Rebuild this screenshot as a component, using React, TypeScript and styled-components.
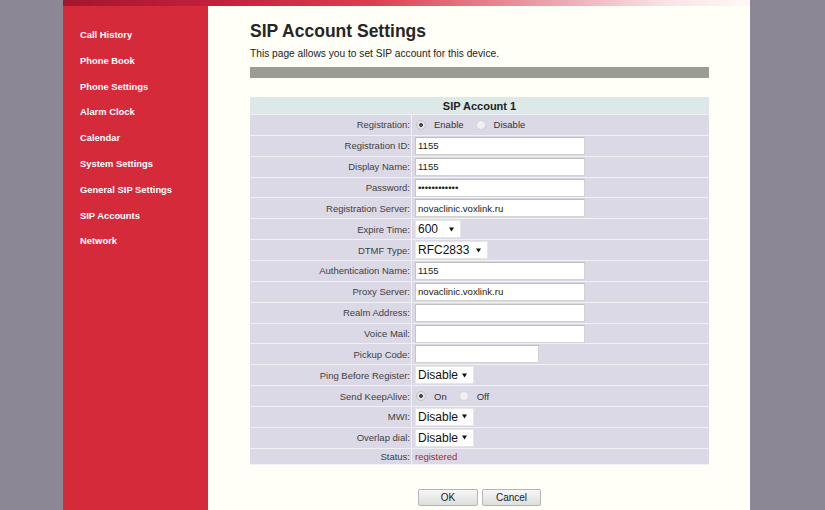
import React from "react";
import styled, { createGlobalStyle } from "styled-components";

const Global = createGlobalStyle`
  html, body { margin: 0; padding: 0; background: #8b8794; }
  body { font-family: "Liberation Sans", Arial, sans-serif; }
`;

const Page = styled.div`
  margin-left: 63px;
  width: 687px;
  height: 510px;
  display: flex;
  flex-direction: column;
  overflow: hidden;
`;

const TopStripe = styled.div`
  height: 6px;
  flex: none;
  background: linear-gradient(
    90deg,
    #a3172a 0%,
    #c2203a 22%,
    #d9404f 45%,
    #eaa0aa 70%,
    #f9e4e6 88%,
    #fff8f6 100%
  );
`;

const Body = styled.div`
  display: flex;
  flex: 1;
`;

const Sidebar = styled.nav`
  width: 145px;
  flex: none;
  background: #d52a3a;
  padding-top: 16px;
  display: flex;
  flex-direction: column;
`;

const NavItem = styled.a`
  display: block;
  height: 25.8px;
  line-height: 25.8px;
  padding-left: 17px;
  color: #fff;
  font-weight: bold;
  font-size: 9.4px;
  text-decoration: none;
`;

const Content = styled.main`
  flex: 1;
  background: #fffff7;
  padding: 15px 41px 0 42px;
`;

const Title = styled.h1`
  margin: 0;
  font-size: 17.5px;
  line-height: 20px;
  font-weight: bold;
  color: #262626;
`;

const Subtitle = styled.p`
  margin: 5.5px 0 0;
  font-size: 10.2px;
  line-height: 13px;
  color: #222;
`;

const Bar = styled.div`
  margin-top: 7.5px;
  height: 11px;
  background: #9b9d94;
`;

const FormTable = styled.table`
  width: 459px;
  margin-top: 19px;
  border-collapse: separate;
  border-spacing: 0;
`;

const Row = styled.tr<{ $h: number }>`
  height: ${(p) => p.$h}px;
`;

const HeadCell = styled.th`
  background: #dde9e8;
  font-size: 11px;
  font-weight: bold;
  color: #222;
  text-align: center;
  padding: 0;
  border-bottom: 1px solid #f1f0f5;
`;

const LabelCell = styled.td`
  width: 160px;
  background: #dcd9e6;
  text-align: right;
  font-size: 9.5px;
  color: #3e3e3e;
  padding: 0 1px 0 0;
  border-bottom: 1px solid #f1f0f5;
  border-right: 1px solid #f1f0f5;
  white-space: nowrap;
  vertical-align: middle;
`;

const ValueCell = styled.td`
  background: #dcd9e6;
  padding: 0 0 0 3px;
  border-bottom: 1px solid #f1f0f5;
  vertical-align: middle;
  font-size: 9.5px;
  color: #333;
  white-space: nowrap;
`;

const TextInput = styled.input<{ $w?: number }>`
  display: block;
  width: ${(p) => p.$w ?? 170}px;
  height: 18px;
  box-sizing: border-box;
  margin: 0;
  padding: 0 2px;
  border: 1px solid #d2d2d2;
  border-top-color: #bdbdbd;
  border-left-color: #c6c6c6;
  background: #fff;
  font: 9.6px "Liberation Sans", Arial, sans-serif;
  color: #222;
  outline: none;
`;

const SelectBox = styled.span<{ $w: number }>`
  display: flex;
  align-items: center;
  justify-content: space-between;
  width: ${(p) => p.$w}px;
  height: 18px;
  box-sizing: border-box;
  border: 1px solid #e6e6e6;
  background: #fff;
  padding: 0 6px 0 2px;
  font-size: 12px;
  color: #111;
`;

const RadioGroup = styled.span`
  display: flex;
  align-items: center;
  font-size: 9.5px;
  color: #333;
`;

const Radio = styled.input`
  appearance: none;
  -webkit-appearance: none;
  margin: 0 8px 0 1px;
  width: 10px;
  height: 10px;
  border-radius: 50%;
  box-sizing: border-box;
  border: 1px solid #d4d4d4;
  background: #f1f1f1;
  &:checked {
    border-color: #c4c4c4;
    background: radial-gradient(circle, #4a4a4a 0 1.6px, #e4e4e4 2.2px);
  }
`;

const RadioText = styled.span`
  margin-right: 11px;
`;

const StatusText = styled.span`
  color: #9a2a40;
  font-size: 9.5px;
`;

const Buttons = styled.div`
  width: 459px;
  margin-top: 24px;
  display: flex;
  justify-content: center;
  gap: 4px;
`;

const Button = styled.button<{ $w: number }>`
  width: ${(p) => p.$w}px;
  height: 17px;
  padding: 0;
  border: 1px solid #b4b4b4;
  border-radius: 2px;
  background: linear-gradient(#f7f7f7, #dedede);
  font: 10px "Liberation Sans", Arial, sans-serif;
  color: #222;
`;

const Arrow = () => (
  <svg width="5" height="5" viewBox="0 0 5 5">
    <path d="M0 0.6 H5 L2.5 4.6 Z" fill="#111" />
  </svg>
);

const Select = ({ value, w }: { value: string; w: number }) => (
  <SelectBox $w={w}>
    <span>{value}</span>
    <Arrow />
  </SelectBox>
);

const Radios = ({ name, a, b }: { name: string; a: string; b: string }) => (
  <RadioGroup>
    <Radio type="radio" name={name} defaultChecked />
    <RadioText>{a}</RadioText>
    <Radio type="radio" name={name} />
    <RadioText>{b}</RadioText>
  </RadioGroup>
);

const nav = [
  "Call History",
  "Phone Book",
  "Phone Settings",
  "Alarm Clock",
  "Calendar",
  "System Settings",
  "General SIP Settings",
  "SIP Accounts",
  "Network",
];

type Field = { label: string; control: React.ReactNode; h?: number };

const RH = 20.87;

const fields: Field[] = [
  { label: "Registration:", control: <Radios name="reg" a="Enable" b="Disable" /> },
  { label: "Registration ID:", control: <TextInput defaultValue="1155" /> },
  { label: "Display Name:", control: <TextInput defaultValue="1155" /> },
  { label: "Password:", control: <TextInput type="password" defaultValue="123456789012" /> },
  { label: "Registration Server:", control: <TextInput defaultValue="novaclinic.voxlink.ru" /> },
  { label: "Expire Time:", control: <Select value="600" w={46} /> },
  { label: "DTMF Type:", control: <Select value="RFC2833" w={73} /> },
  { label: "Authentication Name:", control: <TextInput defaultValue="1155" /> },
  { label: "Proxy Server:", control: <TextInput defaultValue="novaclinic.voxlink.ru" /> },
  { label: "Realm Address:", control: <TextInput defaultValue="" /> },
  { label: "Voice Mail:", control: <TextInput defaultValue="" /> },
  { label: "Pickup Code:", control: <TextInput $w={124} defaultValue="" /> },
  { label: "Ping Before Register:", control: <Select value="Disable" w={59} /> },
  { label: "Send KeepAlive:", control: <Radios name="ka" a="On" b="Off" /> },
  { label: "MWI:", control: <Select value="Disable" w={59} /> },
  { label: "Overlap dial:", control: <Select value="Disable" w={59} /> },
  { label: "Status:", control: <StatusText>registered</StatusText>, h: 16 },
];

export default function App() {
  return (
    <>
      <Global />
      <Page>
        <TopStripe />
        <Body>
          <Sidebar>
            {nav.map((n) => (
              <NavItem key={n} href="#">
                {n}
              </NavItem>
            ))}
          </Sidebar>
          <Content>
            <Title>SIP Account Settings</Title>
            <Subtitle>This page allows you to set SIP account for this device.</Subtitle>
            <Bar />
            <FormTable>
              <thead>
                <Row $h={18}>
                  <HeadCell colSpan={2}>SIP Account 1</HeadCell>
                </Row>
              </thead>
              <tbody>
                {fields.map((f) => (
                  <Row key={f.label} $h={f.h ?? RH}>
                    <LabelCell>{f.label}</LabelCell>
                    <ValueCell>{f.control}</ValueCell>
                  </Row>
                ))}
              </tbody>
            </FormTable>
            <Buttons>
              <Button $w={60}>OK</Button>
              <Button $w={59}>Cancel</Button>
            </Buttons>
          </Content>
        </Body>
      </Page>
    </>
  );
}
